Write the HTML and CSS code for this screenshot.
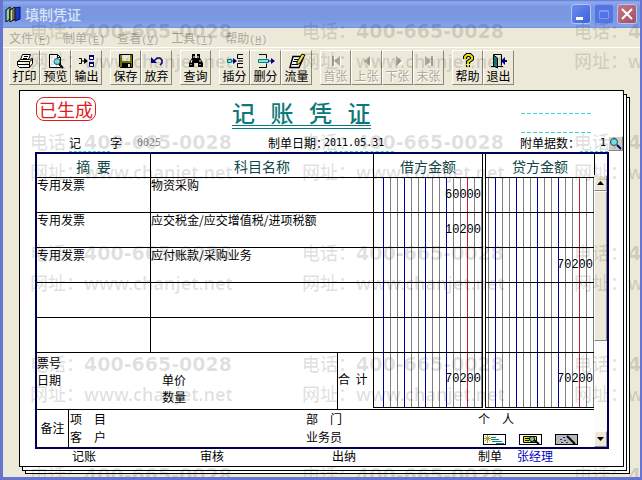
FILE: index.html
```html
<!DOCTYPE html>
<html lang="zh-CN">
<head>
<meta charset="utf-8">
<title>填制凭证</title>
<link rel="stylesheet" href="styles.css">
</head>
<body>
<div class="window">
  <header class="titlebar">
    <svg class="app-icon" width="16" height="16" viewBox="0 0 16 16"><path d="M1 4L5 1v12l-4 3z" fill="#8fd0c0" stroke="#000"/><path d="M5 4l5-3v12l-5 3z" fill="#e8e070" stroke="#000"/><path d="M8 3v11" stroke="#000"/><path d="M10 2l5-1v12l-5 2z" fill="#1838c8" stroke="#001050"/></svg>
    <h1>填制凭证</h1>
    <div class="win-buttons">
      <button class="win-btn" aria-label="最小化"><svg width="18" height="18" viewBox="0 0 18 18"><path d="M4 12h7v3H4z" fill="#fff"/></svg></button>
      <button class="win-btn dim" aria-label="最大化" disabled><svg width="18" height="18" viewBox="0 0 18 18"><path d="M4.500 5.500h9v8h-9zM4 6.500h10" fill="none" stroke="#7d99f4"/></svg></button>
      <button class="win-btn close" aria-label="关闭"><svg width="18" height="18" viewBox="0 0 18 18"><path d="M4 4l10 10M14 4L4 14" stroke="#fff" stroke-width="2"/></svg></button>
    </div>
  </header>

  <nav class="menu">
    <a href="#file">文件<span class="key">(<u>F</u>)</span></a>
    <a href="#make">制单<span class="key">(<u>E</u>)</span></a>
    <a href="#view">查看<span class="key">(<u>V</u>)</span></a>
    <a href="#tools">工具<span class="key">(<u>T</u>)</span></a>
    <a href="#help">帮助<span class="key">(<u>H</u>)</span></a>
  </nav>

  <div class="toolbar">
    <div class="group">
      <button class="tool"><svg width="18" height="16" viewBox="0 0 18 16"><path d="M6.500 1.500h8l-2 5h-8z" fill="#fff" stroke="#000"/><path d="M8 3.500h4M7 5.500h4" stroke="#000"/><path d="M1.500 8.500l3-2h9l3-1v5l-3 4h-10l-2-2z" fill="#fff" stroke="#000"/><path d="M1.500 8.500h12l3-2M13.500 8.500v6M2 11.500h11" stroke="#000" fill="none"/><path d="M9 10h3" stroke="#d8c800"/></svg>打印</button>
      <button class="tool"><svg width="18" height="16" viewBox="0 0 18 16"><path d="M2.500 1.500h8l3 3v10h-11z" fill="#fff" stroke="#000"/><path d="M10.500 1.500v3h3" fill="none" stroke="#000"/><circle cx="10" cy="8.500" r="3" fill="#8fe0e0" stroke="#066"/><path d="M12 11l4 4" stroke="#000" stroke-width="2"/></svg>预览</button>
      <button class="tool"><svg width="18" height="16" viewBox="0 0 18 16"><path d="M1 5.500h2.500v5H1M3 8h5" fill="none" stroke="#000"/><path d="M6 5l4 3-4 3z"/><path d="M11.500 2.500h4v4h-4zM11.500 9.500h4v4h-4z" fill="#fff" stroke="#000080"/><path d="M11 3h5M11 10h5" stroke="#000080" stroke-width="2"/></svg>输出</button>
    </div>
    <div class="group">
      <button class="tool"><svg width="18" height="16" viewBox="0 0 18 16"><path d="M2.500 1.500h13v13h-12l-1-1z" fill="#707800" stroke="#000"/><path d="M5 2h8v6H5z" fill="#e8e6d8"/><path d="M5 10h9v4H5z"/><path d="M11 11h2v3h-2z" fill="#ddd"/></svg>保存</button>
      <button class="tool"><svg width="18" height="16" viewBox="0 0 18 16"><path d="M6 8l3-3h3l2 2v3l-2 2" fill="none" stroke="#000080" stroke-width="1.500"/><path d="M3 4v6h6z" fill="#000080"/></svg>放弃</button>
    </div>
    <div class="group">
      <button class="tool"><svg width="18" height="16" viewBox="0 0 18 16"><path d="M5 1h3v4h2V1h3v4l3 5v4h-5v-4H7v4H2v-4l3-5z"/><path d="M5 7l-1 3M13 7v2M7 3v2M11 3v2M4 11v1M13 11v1" stroke="#fff"/></svg>查询</button>
    </div>
    <div class="group">
      <button class="tool"><svg width="18" height="16" viewBox="0 0 18 16"><path d="M1.500 6.500h4v3h-4z" fill="#80e8e8" stroke="#008080"/><path d="M6 8h4" stroke="#000080"/><path d="M7 5l4 3-4 3z" fill="#000080"/><path d="M17 1.500h-5.500v4H17M17 10.500h-5.500v4H17M12 8h5" fill="none" stroke="#000"/></svg>插分</button>
      <button class="tool"><svg width="18" height="16" viewBox="0 0 18 16"><path d="M2 1.500h7.500v4M2 14.500h7.500v-4" fill="none" stroke="#000"/><path d="M1.500 6.500h10v3h-10z" fill="#80e8e8" stroke="#008080"/><path d="M11 8h4" stroke="#000080"/><path d="M14 5l4 3-4 3z" fill="#000080"/></svg>删分</button>
      <button class="tool"><svg width="18" height="16" viewBox="0 0 18 16"><path d="M5 3.500h9l1 2-4 9H2z" fill="#fff" stroke="#000" stroke-width="1.500"/><path d="M6 6.500h4M5 8.500h4M4 11.500h5" stroke="#000"/><path d="M9 9l5-8 3 1-5 8-3 2z" fill="#f0e040" stroke="#000"/></svg>流量</button>
    </div>
    <div class="group">
      <button class="tool" disabled><svg width="18" height="16" viewBox="0 0 18 16"><path d="M5 3h2v10H5zM13 3v10L7 8z"/></svg>首张</button>
      <button class="tool" disabled><svg width="18" height="16" viewBox="0 0 18 16"><path d="M12 3v10L6 8z"/></svg>上张</button>
      <button class="tool" disabled><svg width="18" height="16" viewBox="0 0 18 16"><path d="M7 3v10l6-5z"/></svg>下张</button>
      <button class="tool" disabled><svg width="18" height="16" viewBox="0 0 18 16"><path d="M5 3v10l6-5zM11 3h2v10h-2z"/></svg>末张</button>
    </div>
    <div class="group">
      <button class="tool"><svg width="18" height="16" viewBox="0 0 18 16"><path d="M6 6V4l2-2h3l2 2v2L9 9v2M9 12v2" fill="none" stroke="#000" stroke-width="4"/><path d="M6 6V4l2-2h3l2 2v2L9 9v2M9 12v2" fill="none" stroke="#e8e000" stroke-width="2"/></svg>帮助</button>
      <button class="tool"><svg width="18" height="16" viewBox="0 0 18 16"><path d="M3.500 13V1.500h8v11M1 13.500h3M8 13.500h5" fill="none" stroke="#000"/><path d="M3.500 2l4 3v10l-4-2z" fill="#108080" stroke="#000"/><path d="M15 4v8l-4-4z" fill="#000080"/><path d="M14 8h3" stroke="#000080" stroke-width="2"/></svg>退出</button>
    </div>
  </div>

  <main class="paper">
    <div class="heading">
      <span class="stamp">已生成</span>
      <h2>记   账   凭   证</h2>
      <div class="blank-lines"><i></i><i></i></div>
    </div>
    <div class="info">
      <div class="word"><span class="kind">记</span><label for="no">字</label><input id="no" class="num no" value="0025"></div>
      <div class="date"><label for="date">制单日期：</label><input id="date" class="num" value="2011.05.31"></div>
      <div class="attach"><label for="att">附单据数：</label><input id="att" class="num" value="1"><button class="lens" aria-label="查看附件"><svg width="13" height="13" viewBox="0 0 13 13"><circle cx="5" cy="5" r="3.500" fill="#70e0e0" stroke="#246"/><path d="M8 8l4 4" stroke="#000060" stroke-width="2"/></svg></button></div>
    </div>

    <div class="voucher">
      <div class="sheet">
        <table>
          <colgroup><col class="c-sum"><col><col class="c-money"><col class="c-gap"><col class="c-money"></colgroup>
          <thead><tr><th>摘  要</th><th>科目名称</th><th>借方金额</th><td class="gap"></td><th class="credit">贷方金额</th></tr></thead>
          <tbody>
            <tr><td>专用发票</td><td>物资采购</td><td class="money debit">60000</td><td class="gap"></td><td class="money credit"></td></tr>
            <tr><td>专用发票</td><td>应交税金/应交增值税/进项税额</td><td class="money debit">10200</td><td class="gap"></td><td class="money credit"></td></tr>
            <tr><td>专用发票</td><td>应付账款/采购业务</td><td class="money debit"></td><td class="gap"></td><td class="money credit">70200</td></tr>
            <tr><td></td><td></td><td class="money debit"></td><td class="gap"></td><td class="money credit"></td></tr>
            <tr><td></td><td></td><td class="money debit"></td><td class="gap"></td><td class="money credit"></td></tr>
          </tbody>
        </table>
        <div class="totals">
          <div class="ticket"><span>票号</span><span></span><span>日期</span><span>单价</span><span></span><span>数量</span></div>
          <div class="sum-label">合  计</div>
          <div class="money debit total">70200</div>
          <div class="money credit total">70200</div>
        </div>
        <div class="memo">
          <div class="memo-label">备注</div>
          <div class="memo-grid">
            <span>项　目</span><span>部　门</span><span>个　人</span>
            <span>客　户</span><span>业务员</span>
            <div class="mini-row">
              <button class="mini" aria-label="明细"><svg width="21" height="9" viewBox="0 0 21 9"><path d="M0 0h21v9H0z" fill="#fff"/><path d="M7 2.500h5M7 4.500h8M8 6.500h10M12 8.500h8" stroke="#108080"/><path d="M1 1l5 5M6 1L1 6M3.500 0v8M0 3.500h7" stroke="#a8a820"/></svg></button>
              <button class="mini" aria-label="查看"><svg width="21" height="9" viewBox="0 0 21 9"><path d="M0 0h21v9H0z" fill="#fff"/><path d="M3.500 1.500h13v6h-13z" fill="#e8e000" stroke="#000"/><path d="M5 3.500h4M5 5.500h4" stroke="#000"/><circle cx="12" cy="4" r="2.500" fill="#70d0d0" stroke="#000"/><path d="M14 5l5 4" stroke="#000" stroke-width="2"/></svg></button>
              <button class="mini" aria-label="辅助"><svg width="21" height="9" viewBox="0 0 21 9"><path d="M0 0h21v9H0z" fill="#b8b8b8"/><path d="M4 4.500h2M7 2.500h2M8 5.500h2M5 7.500h2M10 7.500h2" stroke="#2020a0"/><path d="M11 1l8 8" stroke="#000" stroke-width="2"/></svg></button>
            </div>
          </div>
        </div>
      </div>
      <div class="scroll">
        <div class="scroll-head"></div>
        <button class="arrow" aria-label="向上"><svg width="7" height="4" viewBox="0 0 7 4"><path d="M0 4l3.500-4L7 4z"/></svg></button>
        <div class="thumb"></div>
        <div class="track"></div>
        <button class="arrow" aria-label="向下"><svg width="7" height="4" viewBox="0 0 7 4"><path d="M0 0l3.500 4L7 0z"/></svg></button>
      </div>
    </div>

    <footer class="signs"><span>记账</span><span>审核</span><span>出纳</span><span>制单</span><span class="maker">张经理</span></footer>
  </main>

  <div class="watermark" aria-hidden="true">
    <div><p class="tel">电话：<b>400-665-0028</b></p><p>网址：<b>www.chanjet.net</b></p></div>
    <div><p class="tel">电话：<b>400-665-0028</b></p><p>网址：<b>www.chanjet.net</b></p></div>
    <div><p class="tel">电话：<b>400-665-0028</b></p><p>网址：<b>www.chanjet.net</b></p></div>
    <div><p class="tel">电话：<b>400-665-0028</b></p><p>网址：<b>www.chanjet.net</b></p></div>
    <div><p class="tel">电话：<b>400-665-0028</b></p><p>网址：<b>www.chanjet.net</b></p></div>
    <div><p class="tel">电话：<b>400-665-0028</b></p><p>网址：<b>www.chanjet.net</b></p></div>
    <div><p class="tel">电话：<b>400-665-0028</b></p><p>网址：<b>www.chanjet.net</b></p></div>
    <div><p class="tel">电话：<b>400-665-0028</b></p><p>网址：<b>www.chanjet.net</b></p></div>
    <div><p class="tel">电话：<b>400-665-0028</b></p><p>网址：<b>www.chanjet.net</b></p></div>
    <div><p class="tel">电话：<b>400-665-0028</b></p><p>网址：<b>www.chanjet.net</b></p></div>
    <div><p class="tel">电话：<b>400-665-0028</b></p><p>网址：<b>www.chanjet.net</b></p></div>
    <div><p class="tel">电话：<b>400-665-0028</b></p><p>网址：<b>www.chanjet.net</b></p></div>
    <div><p class="tel">电话：<b>400-665-0028</b></p></div>
    <div><p class="tel">电话：<b>400-665-0028</b></p></div>
    <div><p class="tel">电话：<b>400-665-0028</b></p></div>
  </div>
</div>
</body>
</html>
```
FILE: styles.css
```css
* { box-sizing: border-box; }

body {
  margin: 0;
  font: 12px/14px "Noto Sans CJK SC", sans-serif;
  color: #000;
}

button, input {
  font: inherit;
  color: inherit;
  padding: 0;
  margin: 0;
}

svg { display: block; }

.window {
  position: relative;
  display: flex;
  flex-direction: column;
  min-height: 100vh;
  overflow: hidden;
  background: #ece9d8;
  border: solid #6675d2;
  border-width: 0 2px 3px 3px;
}

/* Title bar */
.titlebar {
  display: flex;
  align-items: center;
  gap: 4px;
  height: 28px;
  margin: 0 -2px 0 -3px;
  padding: 0 5px;
  background: linear-gradient(#5f7ccb 0, #91aaf0 2px, #7a96df 7px, #7b98e2 20px, #86a4ea 26px, #7590d8 28px);
}

.titlebar h1 {
  flex: 1;
  margin: 0;
  font-size: 14px;
  line-height: 20px;
  font-weight: 500;
  color: #d8e4f8;
}

.win-buttons { display: flex; gap: 3px; }

.win-btn {
  width: 20px;
  height: 20px;
  border: 1px solid #b4c6f4;
  border-radius: 3px;
  background: linear-gradient(135deg, #6a8cf0, #3c62dc);
}

.win-btn.dim { background: #5474e4; border-color: #7c98ee; }
.win-btn.close { background: linear-gradient(135deg, #c07888, #a84c60); }

/* Menu */
.menu {
  display: flex;
  gap: 12px;
  height: 20px;
  padding: 3px 6px;
  border-bottom: 1px solid #fff;
}

.menu a { color: #aca899; text-decoration: none; }
.key { font-family: "Liberation Mono", monospace; font-size: 10px; }

/* Toolbar */
.toolbar {
  display: flex;
  gap: 8px;
  padding: 2px 6px;
}

.group { display: flex; }

.tool {
  display: flex;
  flex-direction: column;
  align-items: center;
  width: 31px;
  height: 35px;
  padding-top: 2px;
  border: 1px solid;
  border-color: #fff #8a8776 #8a8776 #fff;
  background: #ece9d8;
  white-space: nowrap;
}

.tool:disabled { color: #aca899; text-shadow: 1px 1px #fff; }
.tool:disabled path { fill: #aca899; }
.tool:disabled svg { filter: drop-shadow(1px 1px 0 #fff); }

/* Stacked voucher paper */
.paper {
  margin: 3px 16px 9px 16px;
  background: #fff;
  border: 1px solid #000;
  box-shadow: 3px 4px 0 -1px #fff, 3px 4px 0 0 #000, 6px 7px 0 -1px #fff, 6px 7px 0 0 #000;
}

.heading {
  display: grid;
  grid-template-columns: 212px 1fr 102px;
  align-items: start;
  height: 43px;
  padding-top: 6px;
}

.stamp {
  justify-self: start;
  margin-left: 16px;
  padding: 0 2px;
  border: 1px solid #e02020;
  border-radius: 8px;
  font-size: 18px;
  line-height: 22px;
  color: #e02020;
}

.heading h2 {
  justify-self: start;
  margin: 2px 0 0;
  border-bottom: 4px double #008080;
  font-size: 23px;
  line-height: 26px;
  font-weight: 500;
  white-space: pre;
  color: #107878;
}

.blank-lines {
  display: flex;
  flex-direction: column;
  gap: 18px;
  width: 70px;
  padding-top: 16px;
}

.blank-lines i { height: 1px; background: repeating-linear-gradient(90deg, #38d8d8 0 4px, transparent 4px 6px); }

.info {
  display: grid;
  grid-template-columns: 248px 1fr 103px;
  height: 18px;
}

.info > div { display: flex; align-items: center; }

.num {
  border: 0;
  background: transparent;
  font-family: "DejaVu Sans Mono", monospace;
  font-size: 10px;
}

.word { padding-left: 49px; }
.kind { width: 41px; border-bottom: 1px dashed #38d8d8; line-height: 17px; }
.no { width: 40px; margin-left: 15px; color: #888; }
.date input { width: 70px; margin-left: -4px; border-bottom: 1px dashed #38d8d8; line-height: 16px; }
.attach label { white-space: nowrap; }
.attach input { flex: 1; min-width: 0; text-align: right; padding-right: 2px; border-bottom: 1px dashed #38d8d8; line-height: 16px; }

.lens {
  width: 15px;
  height: 15px;
  border: 1px solid;
  border-color: #fff #888 #888 #fff;
  background: #d0cec0;
}

/* Voucher frame */
.voucher {
  display: flex;
  margin: 0 14px 0 15px;
  border: 2px solid #000050;
}

.sheet { flex: 1; min-width: 0; }

table {
  width: 100%;
  table-layout: fixed;
  border-collapse: separate;
  border-spacing: 0;
}

.c-sum { width: 114px; }
.c-money { width: 109px; }
.c-gap { width: 2px; }

th, td {
  padding: 0;
  border: solid #000;
  border-width: 0 1px 1px 0;
}

th {
  height: 24px;
  font-size: 14px;
  line-height: 20px;
  font-weight: 400;
  white-space: pre;
  color: #104848;
}

td { height: 35px; vertical-align: top; }
thead td { height: 24px; }
td.gap { border: 0; }
.credit { border-width: 0 0 1px 1px; }

.money {
  padding-right: 1px;
  text-align: right;
  vertical-align: middle;
  font-family: "Liberation Mono", monospace;
  --digits: linear-gradient(90deg, transparent 93px, #c02030 93px, #c02030 94px, transparent 94px),
    repeating-linear-gradient(90deg, transparent 0 9px, #0000a0 9px 10px, transparent 10px 21px),
    repeating-linear-gradient(90deg, transparent 0 2px, #808080 2px 3px, transparent 3px 7px);
  background: var(--digits);
}

.money.debit { background: linear-gradient(90deg, #fff 8px, transparent 8px), var(--digits); }

.totals {
  display: grid;
  grid-template-columns: 1fr 36px 109px 2px 109px;
  height: 57px;
  border-bottom: 1px solid #000;
}

.ticket {
  display: grid;
  grid-template-columns: 125px 1fr;
  grid-template-rows: repeat(3, 17px);
  align-items: center;
  padding-top: 1px;
  border-right: 1px solid #000;
}

.sum-label { border-right: 1px solid #000; margin-bottom: 1px; line-height: 52px; white-space: pre; }

.total { margin-bottom: 1px; line-height: 52px; }
.total.debit { border: solid #000; border-width: 0 1px 1px 0; }
.total.credit { grid-column: 5; border-left: 1px solid #000; border-bottom: 1px solid #000; }

.memo { display: flex; height: 37px; }

.memo-label {
  width: 32px;
  border-right: 1px solid #000;
  line-height: 36px;
  text-align: center;
}

.memo-grid {
  flex: 1;
  display: grid;
  grid-template-columns: 236fr 172fr 116fr;
  grid-template-rows: 18px 18px;
  align-items: center;
  padding-left: 1px;
}

.mini-row { display: flex; gap: 13px; padding: 5px 0 0 5px; }
.mini { border: 1px solid #000; background: #fff; }

/* Scroll bar */
.scroll {
  display: flex;
  flex-direction: column;
  width: 13px;
}

.scroll-head { height: 21px; border-left: 1px solid #000; }

.arrow {
  display: grid;
  place-items: center;
  height: 16px;
  border: 1px solid;
  border-color: #fff #888 #888 #fff;
  background: #ece9d8;
}

.thumb {
  flex: 149;
  border: 1px solid;
  border-color: #fff #888 #888 #fff;
  background: #ece9d8;
}

.track { flex: 91; background: #fdfcf8; }

.signs {
  display: grid;
  grid-template-columns: 128fr 132fr 146fr 39fr 106fr;
  padding-left: 52px;
  height: 17px;
}

.maker { color: #0000c0; }

/* Tiled watermark over the whole window */
.watermark {
  position: absolute;
  inset: 16px 0 0 27px;
  display: grid;
  grid-template-columns: repeat(3, 272px);
  grid-auto-rows: 111px;
  overflow: hidden;
  pointer-events: none;
  color: rgba(0, 0, 0, 0.12);
  font-size: 18px;
  line-height: 29px;
  font-weight: 500;
}

.watermark p { margin: 0; white-space: nowrap; }
.watermark b { font-family: "Noto Sans", sans-serif; font-size: 18px; font-weight: 600; }
.watermark .tel b { font-family: "DejaVu Sans", sans-serif; font-size: 19px; font-weight: 700; }
```
